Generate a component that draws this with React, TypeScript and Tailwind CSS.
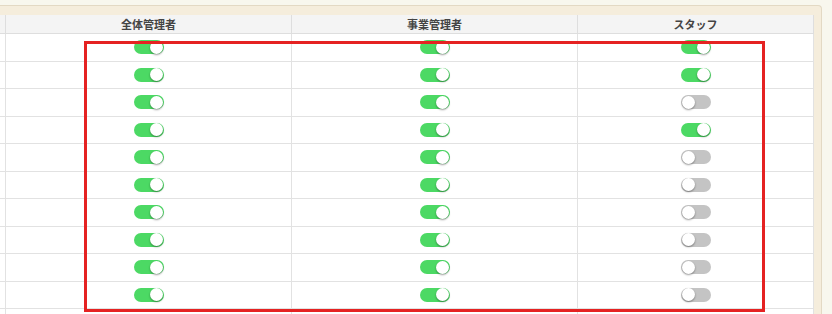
import * as React from "react"

const rows: [boolean, boolean, boolean][] = [
    [true, true, true],
    [true, true, true],
    [true, true, false],
    [true, true, true],
    [true, true, false],
    [true, true, false],
    [true, true, false],
    [true, true, false],
    [true, true, false],
    [true, true, false],
    [true, true, false],
]

function Toggle({on}: {on: boolean}) {
    return (
        <div
            className={
                on
                    ? "relative w-[30px] h-[14px] rounded-full bg-[#4cd964]"
                    : "relative w-[30px] h-[14px] rounded-full bg-[#c4c4c4]"
            }
        >
            <div
                className={
                    on
                        ? "absolute top-[0.5px] right-[1px] w-[13px] h-[13px] rounded-full bg-white shadow-[0_1px_2px_rgba(0,0,0,0.4)]"
                        : "absolute top-[0.5px] left-[1px] w-[13px] h-[13px] rounded-full bg-white shadow-[0_1px_2px_rgba(0,0,0,0.4)]"
                }
            />
        </div>
    )
}

export default function App() {
    return (
        <div
            className="relative w-[832px] h-[314px] overflow-hidden bg-[#f8f7ee] pt-[5px]"
            style={{fontFamily: '"Noto Sans CJK JP", "Noto Sans", sans-serif'}}
        >
            <div className="w-[822px] h-[340px] bg-[#f5eddc] border-t border-r border-[#e3d9c4] rounded-tr-[4px] pt-[9px]">
                <div className="w-[814px] bg-white">
                    {/* header */}
                    <div className="flex h-[19px] bg-[#f4f4f4] border-b border-[#dedede] text-[11px] font-semibold text-[#444]">
                        <div className="w-[5px]" />
                        <div className="w-[286px] border-l border-[#dedede] flex items-center justify-center">全体管理者</div>
                        <div className="w-[286px] border-l border-[#dedede] flex items-center justify-center">事業管理者</div>
                        <div className="w-[237px] border-l border-r border-[#dedede] flex items-center justify-center">スタッフ</div>
                    </div>
                    {rows.map((r, i) => (
                        <div key={i} className="flex h-[27.5px] border-b border-[#e2e2e2]">
                            <div className="w-[5px]" />
                            <div className="w-[286px] border-l border-[#e2e2e2] flex items-center justify-center">
                                <Toggle on={r[0]} />
                            </div>
                            <div className="w-[286px] border-l border-[#e2e2e2] flex items-center justify-center">
                                <Toggle on={r[1]} />
                            </div>
                            <div className="w-[237px] border-l border-r border-[#e2e2e2] flex items-center justify-center">
                                <Toggle on={r[2]} />
                            </div>
                        </div>
                    ))}
                </div>
            </div>

            {/* annotation */}
            <div className="absolute left-[84px] top-[41px] w-[681px] h-[271px] border-[3.5px] border-[#e52222]" />
        </div>
    )
}
